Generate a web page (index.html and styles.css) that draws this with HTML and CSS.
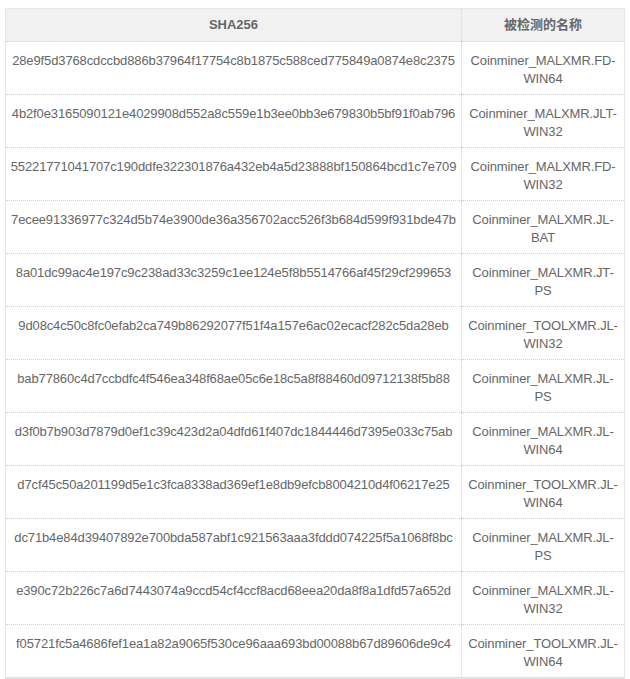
FILE: index.html
```html
<!DOCTYPE html>
<html lang="zh">
<head>
<meta charset="utf-8">
<title>SHA256</title>
<link rel="stylesheet" href="styles.css">
</head>
<body>
<table class="ioc">
  <colgroup><col class="c-hash"><col class="c-name"></colgroup>
  <thead>
    <tr><th>SHA256</th><th>被检测的名称</th></tr>
  </thead>
  <tbody>
    <tr><td>28e9f5d3768cdccbd886b37964f17754c8b1875c588ced775849a0874e8c2375</td><td>Coinminer_MALXMR.FD-WIN64</td></tr>
    <tr><td>4b2f0e3165090121e4029908d552a8c559e1b3ee0bb3e679830b5bf91f0ab796</td><td>Coinminer_MALXMR.JLT-WIN32</td></tr>
    <tr><td>55221771041707c190ddfe322301876a432eb4a5d23888bf150864bcd1c7e709</td><td>Coinminer_MALXMR.FD-WIN32</td></tr>
    <tr><td>7ecee91336977c324d5b74e3900de36a356702acc526f3b684d599f931bde47b</td><td>Coinminer_MALXMR.JL-BAT</td></tr>
    <tr><td>8a01dc99ac4e197c9c238ad33c3259c1ee124e5f8b5514766af45f29cf299653</td><td>Coinminer_MALXMR.JT-PS</td></tr>
    <tr><td>9d08c4c50c8fc0efab2ca749b86292077f51f4a157e6ac02ecacf282c5da28eb</td><td>Coinminer_TOOLXMR.JL-WIN32</td></tr>
    <tr><td>bab77860c4d7ccbdfc4f546ea348f68ae05c6e18c5a8f88460d09712138f5b88</td><td>Coinminer_MALXMR.JL-PS</td></tr>
    <tr><td>d3f0b7b903d7879d0ef1c39c423d2a04dfd61f407dc1844446d7395e033c75ab</td><td>Coinminer_MALXMR.JL-WIN64</td></tr>
    <tr><td>d7cf45c50a201199d5e1c3fca8338ad369ef1e8db9efcb8004210d4f06217e25</td><td>Coinminer_TOOLXMR.JL-WIN64</td></tr>
    <tr><td>dc71b4e84d39407892e700bda587abf1c921563aaa3fddd074225f5a1068f8bc</td><td>Coinminer_MALXMR.JL-PS</td></tr>
    <tr><td>e390c72b226c7a6d7443074a9ccd54cf4ccf8acd68eea20da8f8a1dfd57a652d</td><td>Coinminer_MALXMR.JL-WIN32</td></tr>
    <tr><td>f05721fc5a4686fef1ea1a82a9065f530ce96aaa693bd00088b67d89606de9c4</td><td>Coinminer_TOOLXMR.JL-WIN64</td></tr>
  </tbody>
</table>
</body>
</html>
```

FILE: styles.css
```css
html, body {
  margin: 0;
  background: #ffffff;
}
body {
  padding: 8px 6px 0 5px;
  font-family: "Liberation Sans", Arial, "Noto Sans CJK SC", sans-serif;
  font-size: 13px;
  color: #666666;
}
.ioc {
  width: 619px;
  table-layout: fixed;
  border-collapse: collapse;
  border-top: 1px solid #e6e6e6;
  border-left: 1px solid #e6e6e6;
  border-right: 1px solid #e6e6e6;
  border-bottom: 2px solid #e2e2e2;
}
.c-hash { width: 456px; }
.c-name { width: 163px; }
.ioc th {
  background: #f1f1f1;
  font-weight: bold;
  color: #666666;
  line-height: 18px;
  padding: 7px 4px;
  text-align: center;
  border-bottom: 1px dotted #d4d4d4;
}
.ioc th + th,
.ioc td + td {
  border-left: 1px dotted #d4d4d4;
}
.ioc td {
  line-height: 18px;
  height: 36px;
  padding: 10px 4px 6px;
  text-align: center;
  vertical-align: top;
  letter-spacing: -0.12px;
  border-bottom: 1px dotted #d4d4d4;
}
.ioc tbody tr:last-child td {
  border-bottom: none;
}
```
